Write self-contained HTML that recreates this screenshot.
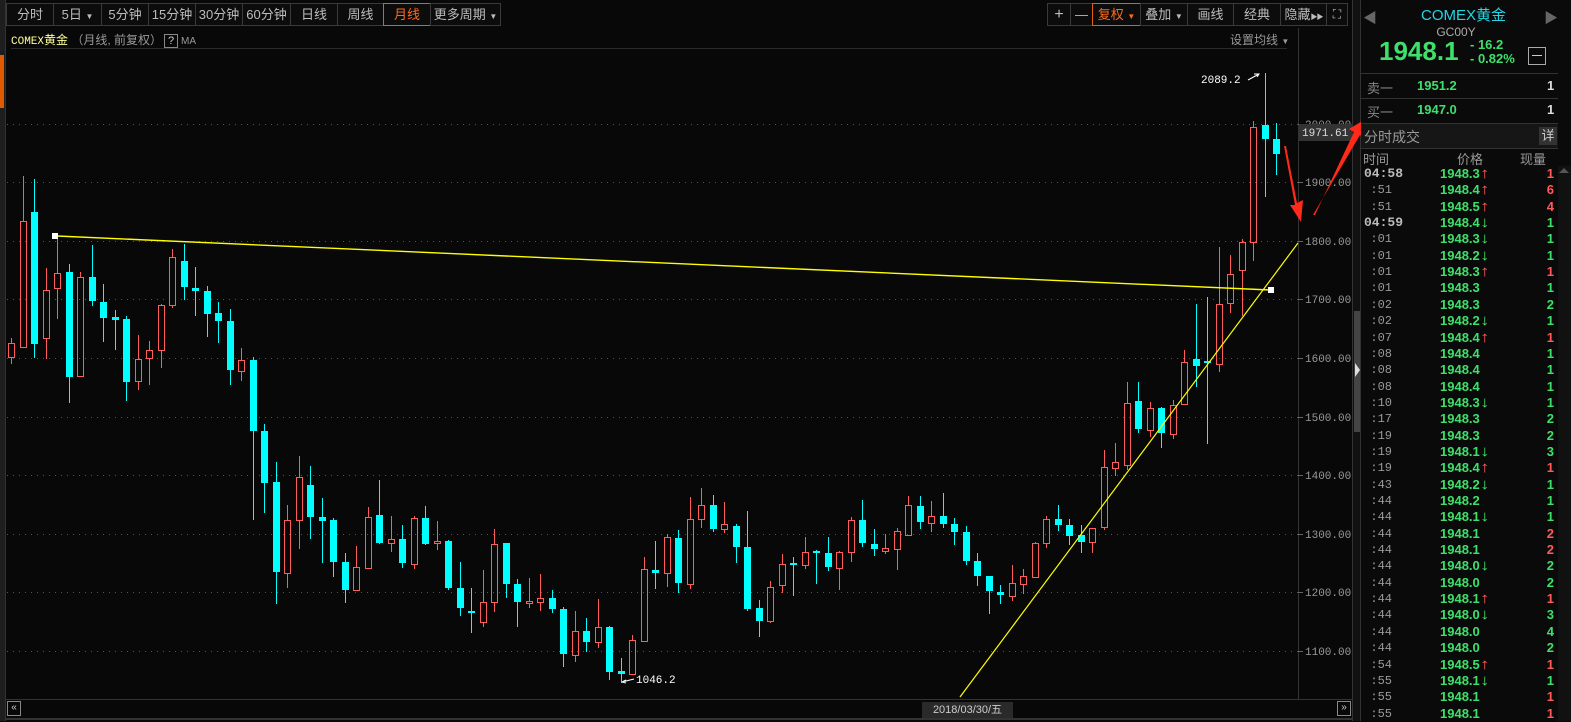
<!DOCTYPE html>
<html><head><meta charset="utf-8">
<style>
*{margin:0;padding:0;box-sizing:border-box}
body{width:1571px;height:721px;background:#080808;overflow:hidden;position:relative;font-family:"Liberation Sans","Noto Sans CJK SC",sans-serif;color:#bbb}
.abs{position:absolute}
.tb{position:absolute;top:3px;height:23px;border:1px solid #3a3a3a;background:#0c0c0c;color:#bdbdbd;font-size:13px;line-height:21px;text-align:center;white-space:nowrap;overflow:hidden}
.on{border-color:#e06010;color:#ff6a1a}
.row{position:absolute;left:1362px;width:192px;height:16px;font-size:13px;font-weight:bold;line-height:16px}
.t{position:absolute;left:0;width:30px;text-align:right;color:#999;font-weight:normal;font-family:"Liberation Mono",monospace;font-size:12px}
.tb2{position:absolute;left:2px;color:#bbb;font-family:"Liberation Mono",monospace;font-size:13px}
.p{position:absolute;left:76px;color:#3ee06a}
.v{position:absolute;right:0;text-align:right}
.g{color:#3ee06a}.r{color:#ff5a5a}
.ar{display:inline-block;font-size:15px;font-weight:bold;margin-left:1px;transform:scaleX(1.3)}
</style></head><body>
<div class="abs" style="left:0;top:0;width:5px;height:721px;background:#1e1e1e"></div>
<div class="abs" style="left:0;top:55px;width:4px;height:53px;background:#e05a00"></div>
<div class="abs" style="left:5px;top:0;width:1px;height:721px;background:#333"></div>
<div class="tb" style="left:6px;width:48px">分时</div>
<div class="tb" style="left:53px;width:49px">5日 <span style="font-size:8px">▼</span></div>
<div class="tb" style="left:101px;width:48px">5分钟</div>
<div class="tb" style="left:148px;width:48px">15分钟</div>
<div class="tb" style="left:195px;width:48px">30分钟</div>
<div class="tb" style="left:242px;width:49px">60分钟</div>
<div class="tb" style="left:290px;width:48px">日线</div>
<div class="tb" style="left:337px;width:47px">周线</div>
<div class="tb on" style="left:383px;width:48px">月线</div>
<div class="tb" style="left:430px;width:71px">更多周期 <span style="font-size:8px">▼</span></div>
<div class="tb" style="left:1047px;width:24px;font-size:16px">+</div>
<div class="tb" style="left:1070px;width:23px">—</div>
<div class="tb on" style="left:1092px;width:49px">复权 <span style="font-size:8px">▼</span></div>
<div class="tb" style="left:1140px;width:48px">叠加 <span style="font-size:8px">▼</span></div>
<div class="tb" style="left:1187px;width:47px">画线</div>
<div class="tb" style="left:1233px;width:48px">经典</div>
<div class="tb" style="left:1280px;width:47px">隐藏<span style="font-size:7px;letter-spacing:-1px">▶▶</span></div>
<div class="tb" style="left:1326px;width:22px;font-size:12px">⛶</div>
<div class="abs" style="left:11px;top:31px;font-size:12px;white-space:nowrap"><span style="color:#ffff99;font-family:'Liberation Mono','Noto Sans CJK SC',monospace;font-size:11px">COMEX</span><span style="color:#ffff99">黄金</span><span style="color:#999"> （月线, 前复权）</span><span style="display:inline-block;border:1px solid #888;width:14px;height:14px;line-height:12px;text-align:center;color:#ccc;font-size:11px;margin-left:2px">?</span><span style="color:#999;font-size:10px;margin-left:3px">MA</span></div>
<div class="abs" style="left:1230px;top:31px;font-size:12px;color:#999">设置均线 <span style="font-size:8px">▼</span></div>
<div class="abs" style="left:11px;top:48px;width:1276px;height:1px;background:#2a2a2a"></div>
<div class="abs" style="left:1298px;top:28px;width:1px;height:672px;background:#333"></div>
<div class="abs" style="left:5px;top:699px;width:1348px;height:1px;background:#333"></div>
<div class="abs" style="left:5px;top:718px;width:1348px;height:2px;background:#333"></div>
<div class="abs" style="left:7px;top:701px;width:14px;height:15px;border:1px solid #888;color:#ccc;font-size:10px;line-height:12px;text-align:center">«</div>
<div class="abs" style="left:1337px;top:701px;width:14px;height:15px;border:1px solid #888;color:#ccc;font-size:10px;line-height:12px;text-align:center">»</div>
<div class="abs" style="left:922px;top:702px;width:91px;height:16px;background:#2a2a2a;color:#ccc;font-size:11px;line-height:16px;text-align:center">2018/03/30/五</div>
<div class="abs" style="left:1352px;top:0;width:9px;height:721px;background:#111;border-left:1px solid #333;border-right:1px solid #333"></div>
<div class="abs" style="left:1354px;top:311px;width:6px;height:121px;background:#444"></div>
<div class="abs" style="left:1355px;top:363px;width:0;height:0;border-top:7px solid transparent;border-bottom:7px solid transparent;border-left:5px solid #ddd"></div>

<svg class="abs" style="left:0;top:0" width="1571" height="721" id="ch"></svg>

<div class="abs" style="left:1361px;top:0;width:210px;height:721px;background:#0a0a0a"></div>
<div class="abs" style="left:1363px;top:8px;color:#666;font-size:14px">◀</div>
<div class="abs" style="left:1544px;top:8px;color:#666;font-size:14px">▶</div>
<div class="abs" style="left:1361px;top:4px;width:205px;text-align:center;color:#22d6e6;font-size:15px">COMEX黄金</div>
<div class="abs" style="left:1361px;top:25px;width:190px;text-align:center;color:#aaa;font-size:12px">GC00Y</div>
<div class="abs" style="left:1379px;top:36px;color:#3ee06a;font-size:26px;font-weight:bold">1948.1</div>
<div class="abs" style="left:1470px;top:38px;color:#3ee06a;font-size:13px;font-weight:bold;line-height:14px">- 16.2<br>- 0.82%</div>
<div class="abs" style="left:1528px;top:47px;width:18px;height:18px;border:1px solid #aaa"><div style="margin:7px 3px;height:1px;background:#ccc"></div></div>
<div class="abs" style="left:1361px;top:73px;width:197px;height:1px;background:#333"></div>
<div class="abs" style="left:1367px;top:78px;color:#888;font-size:13px">卖一</div>
<div class="abs" style="left:1417px;top:78px;color:#3ee06a;font-size:13px;font-weight:bold">1951.2</div>
<div class="abs" style="left:1547px;top:78px;color:#ddd;font-size:13px;font-weight:bold">1</div>
<div class="abs" style="left:1361px;top:98px;width:197px;height:1px;background:#333"></div>
<div class="abs" style="left:1367px;top:102px;color:#888;font-size:13px">买一</div>
<div class="abs" style="left:1417px;top:102px;color:#3ee06a;font-size:13px;font-weight:bold">1947.0</div>
<div class="abs" style="left:1547px;top:102px;color:#ddd;font-size:13px;font-weight:bold">1</div>
<div class="abs" style="left:1361px;top:123px;width:197px;height:26px;background:#161616;border-top:1px solid #333;border-bottom:1px solid #333"></div>
<div class="abs" style="left:1364px;top:127px;color:#999;font-size:14px">分时成交</div>
<div class="abs" style="left:1539px;top:127px;width:18px;height:18px;background:#333;color:#ccc;font-size:13px;text-align:center;line-height:18px">详</div>
<div class="abs" style="left:1363px;top:149px;color:#999;font-size:13px">时间</div>
<div class="abs" style="left:1457px;top:149px;color:#999;font-size:13px">价格</div>
<div class="abs" style="left:1520px;top:149px;color:#999;font-size:13px">现量</div>
<div class="abs" style="left:1558px;top:166px;width:13px;height:555px;background:#111"></div>
<div class="abs" style="left:1559px;top:168px;border-left:5px solid transparent;border-right:5px solid transparent;border-bottom:5px solid #555"></div>
<div id="rows"></div>

<script>
var C=[
[338,343,357,364,1],[176,221,347,347,1],[179,212,344,358,0],[268,290,338,359,1],[237,273,288,319,1],
[264,272,377,403,0],[272,277,376,377,1],[245,277,301,306,0],[284,302,318,342,0],[310,317,320,350,0],
[316,319,382,401,0],[335,359,381,390,1],[341,350,358,385,1],[304,305,350,368,1],[249,257,305,308,1],
[244,261,287,300,0],[267,288,291,316,0],[286,291,314,337,0],[302,313,321,343,0],[309,321,370,385,0],
[348,360,371,381,1],[357,360,431,520,0],[424,431,483,513,0],[462,482,572,604,0],[505,520,573,588,1],
[456,477,520,549,1],[466,485,517,539,0],[498,517,521,563,0],[518,520,562,577,0],[553,562,590,603,0],
[546,567,590,590,1],[507,517,568,568,1],[480,515,543,544,0],[516,539,543,552,1],[525,539,563,568,0],
[516,518,564,569,1],[506,518,544,545,0],[521,541,543,550,1],[540,541,588,590,0],[562,588,608,616,0],
[588,611,613,633,0],[570,602,622,627,1],[529,544,602,612,1],[543,543,584,598,0],[579,584,602,627,0],
[578,601,603,608,1],[574,598,602,611,1],[590,598,609,613,0],[607,609,654,667,0],[611,631,655,662,1],
[618,631,642,652,0],[599,627,642,648,1],[626,627,672,680,0],[658,671,674,683,0],[635,640,674,674,1],
[557,569,641,641,1],[541,570,573,589,0],[534,537,573,587,1],[530,538,583,593,0],[497,519,584,589,1],
[488,505,519,528,1],[495,505,529,532,0],[502,524,529,533,1],[524,526,547,563,0],[511,547,609,611,0],
[600,608,621,637,0],[581,587,621,623,1],[554,564,585,593,1],[557,563,565,596,0],[537,552,565,569,1],
[550,551,553,584,0],[537,553,567,571,0],[551,552,568,590,1],[517,520,552,562,1],[500,520,543,547,0],
[529,544,549,556,0],[534,548,551,554,1],[528,531,549,570,1],[496,505,535,535,1],[496,506,522,529,0],
[501,516,523,532,1],[493,516,524,528,0],[518,524,532,545,0],[526,532,561,565,0],[553,561,576,586,0],
[576,576,591,614,0],[585,592,595,604,0],[565,583,596,601,1],[569,576,584,594,1],[542,543,577,577,1],
[516,519,543,548,1],[505,519,525,531,0],[519,525,536,545,0],[525,535,542,553,0],[528,528,542,553,1],
[450,467,527,530,1],[443,462,468,476,1],[382,403,465,470,1],[382,401,429,433,0],[402,408,430,437,1],
[407,408,433,448,0],[400,405,434,439,1],[350,362,404,404,1],[304,359,366,387,0],[297,361,363,444,0],
[247,304,364,372,1],[255,274,303,313,1],[239,242,270,316,1],[121,127,242,261,1],[73,125,139,197,0],
[123,139,154,175,0]];
var s='';
var gy=[124,182,241,299,358,417,475,534,592,651],lb=['2000.00','1900.00','1800.00','1700.00','1600.00','1500.00','1400.00','1300.00','1200.00','1100.00'];
for(var i=0;i<gy.length;i++){s+='<line x1="7" y1="'+gy[i]+'.5" x2="1298" y2="'+gy[i]+'.5" stroke="#555" stroke-dasharray="1,5"/>';
s+='<line x1="1298" y1="'+gy[i]+'.5" x2="1303" y2="'+gy[i]+'.5" stroke="#666"/>';
s+='<text x="1305" y="'+(gy[i]+4)+'" fill="#999" font-size="11" font-family="Liberation Mono,monospace">'+lb[i]+'</text>';}
for(var i=0;i<C.length;i++){var c=C[i],x=Math.round(11.3+i*11.5);
 if(c[4]){s+='<line x1="'+(x+.5)+'" y1="'+c[0]+'" x2="'+(x+.5)+'" y2="'+c[1]+'" stroke="#ff5c5c"/><line x1="'+(x+.5)+'" y1="'+c[2]+'" x2="'+(x+.5)+'" y2="'+c[3]+'" stroke="#ff5c5c"/>';
 s+='<rect x="'+(x-2.5)+'" y="'+(c[1]+.5)+'" width="6" height="'+Math.max(1,c[2]-c[1])+'" fill="none" stroke="#ff5c5c"/>';}
 else{s+='<line x1="'+(x+.5)+'" y1="'+c[0]+'" x2="'+(x+.5)+'" y2="'+c[3]+'" stroke="#00ffff"/>';
 s+='<rect x="'+(x-3)+'" y="'+c[1]+'" width="7" height="'+Math.max(2,c[2]-c[1])+'" fill="#00ffff"/>';}}
s+='<line x1="57" y1="236" x2="1270" y2="290" stroke="#ffff00" stroke-width="1.4"/>';
s+='<line x1="960" y1="697" x2="1298" y2="243" stroke="#ffff00" stroke-width="1.2"/>';
s+='<rect x="52" y="233" width="6" height="6" fill="#fff"/><rect x="1268" y="287" width="6" height="6" fill="#fff"/>';
s+='<text x="1201" y="83" fill="#fff" font-size="11" font-family="Liberation Mono,monospace">2089.2</text><path d="M1248 80 L1259 74 M1254 74 L1259 74 L1257 77" stroke="#fff" fill="none"/>';
s+='<text x="636" y="683" fill="#fff" font-size="11" font-family="Liberation Mono,monospace">1046.2</text><path d="M634 679 L622 682 M622 682 L626 680 M622 682 L626 683" stroke="#fff" fill="none"/>';
s+='<rect x="1299" y="124" width="54" height="17" fill="#333"/><text x="1302" y="136" fill="#ddd" font-size="11" font-family="Liberation Mono,monospace">1971.61</text>';
s+='<polygon points="1284,146 1286,146 1297,203 1303,200 1301,222 1290,205 1295,205" fill="#ff2a1a"/>';
s+='<polygon points="1313,215 1315,215 1354,132 1349,129 1369,117 1364,138 1360,135" fill="#ff2a1a"/>';
document.getElementById('ch').innerHTML=s;
var R=[['04:58','1948.3','u','1','r'],[':51','1948.4','u','6','r'],[':51','1948.5','u','4','r'],['04:59','1948.4','d','1','g'],
[':01','1948.3','d','1','g'],[':01','1948.2','d','1','g'],[':01','1948.3','u','1','r'],[':01','1948.3','','1','g'],[':02','1948.3','','2','g'],
[':02','1948.2','d','1','g'],[':07','1948.4','u','1','r'],[':08','1948.4','','1','g'],[':08','1948.4','','1','g'],[':08','1948.4','','1','g'],
[':10','1948.3','d','1','g'],[':17','1948.3','','2','g'],[':19','1948.3','','2','g'],[':19','1948.1','d','3','g'],[':19','1948.4','u','1','r'],
[':43','1948.2','d','1','g'],[':44','1948.2','','1','g'],[':44','1948.1','d','1','g'],[':44','1948.1','','2','r'],[':44','1948.1','','2','r'],
[':44','1948.0','d','2','g'],[':44','1948.0','','2','g'],[':44','1948.1','u','1','r'],[':44','1948.0','d','3','g'],[':44','1948.0','','4','g'],
[':44','1948.0','','2','g'],[':54','1948.5','u','1','r'],[':55','1948.1','d','1','g'],[':55','1948.1','','1','r'],[':55','1948.1','','1','r']];
var h='';
for(var i=0;i<R.length;i++){var r=R[i],y=Math.round(166+i*16.35);
 var tm=r[0].length>3?'<span class="tb2">'+r[0]+'</span>':'<span class="t">'+r[0]+'</span>';
 var ar=r[2]=='u'?'<span class="ar r">↑</span>':r[2]=='d'?'<span class="ar g">↓</span>':'';
 h+='<div class="row" style="top:'+y+'px">'+tm+'<span class="p" style="left:78px">'+r[1]+ar+'</span><span class="v '+r[4]+'">'+r[3]+'</span></div>';}
document.getElementById('rows').innerHTML=h;
</script>
</body></html>
